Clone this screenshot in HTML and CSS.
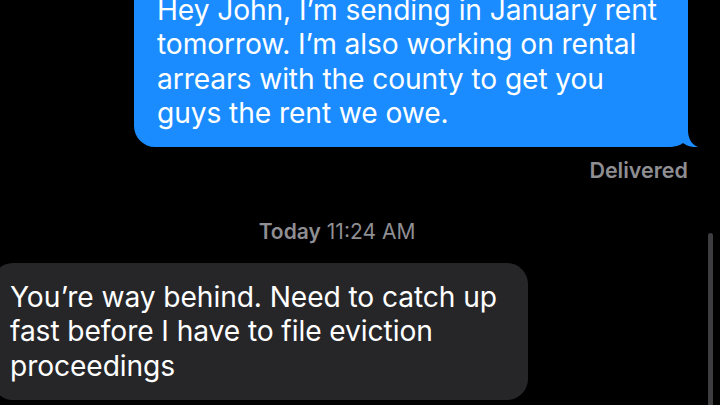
FILE: index.html
```html
<!DOCTYPE html>
<html>
<head>
<meta charset="utf-8">
<link rel="stylesheet" href="styles.css">
</head>
<body>
<div class="thread">
  <div class="row out">
    <div class="bubble sent">Hey John, I’m sending in January rent<br>tomorrow. I’m also working on rental<br>arrears with the county to get you<br>guys the rent we owe.<svg class="tail" viewBox="0 0 30 25" width="30" height="25"><path d="M0 0 H20 V8 C20 16 23 22 30 25 C24 25.5 19 24 15 21 C12 23.5 7 25 0 25 Z" fill="#1a8cff"/></svg></div>
  </div>
  <div class="status">Delivered</div>
  <div class="stamp"><b>Today</b> 11:24 AM</div>
  <div class="row in">
    <div class="bubble recv">You’re way behind. Need to catch up<br>fast before I have to file eviction<br>proceedings</div>
  </div>
</div>
<div class="scrollbar"></div>
</body>
</html>
```
FILE: styles.css
```css
html, body {
  margin: 0;
  padding: 0;
  background: #000;
  width: 720px;
  height: 405px;
  overflow: hidden;
}
body {
  position: relative;
  font-family: Inter, "Noto Sans", sans-serif;
  color: #fff;
}
.thread {
  display: flex;
  flex-direction: column;
}
.row {
  display: flex;
}
.row.out {
  justify-content: flex-end;
  padding-right: 32px;
  margin-top: -22px;
}
.row.in {
  justify-content: flex-start;
  margin-left: -8px;
  margin-top: 19.5px;
}
.bubble {
  position: relative;
  font-size: 28.2px;
  line-height: 34.3px;
  border-radius: 21px;
  white-space: nowrap;
  letter-spacing: -0.1px;
}
.sent {
  background: #1a8cff;
  width: 554px;
  box-sizing: border-box;
  padding: 15px 10px 17px 23px;
}
.recv {
  background: #262629;
  width: 536px;
  box-sizing: border-box;
  padding: 17px 10px 17px 18px;
}
.tail {
  position: absolute;
  right: -10px;
  bottom: 0;
  display: block;
}
.status {
  align-self: flex-end;
  margin-right: 32px;
  margin-top: 10.5px;
  font-size: 21.5px;
  line-height: 25px;
  font-weight: 600;
  color: #8e8e93;
}
.stamp {
  display: flex;
  justify-content: center;
  gap: 6px;
  padding-right: 46px;
  margin-top: 36px;
  font-size: 21px;
  line-height: 25px;
  color: #8e8e93;
}
.stamp b {
  font-weight: 600;
}
.scrollbar {
  position: absolute;
  left: 708px;
  top: 233px;
  width: 5px;
  height: 190px;
  border-radius: 3px;
  background: #3d3d40;
}
```
